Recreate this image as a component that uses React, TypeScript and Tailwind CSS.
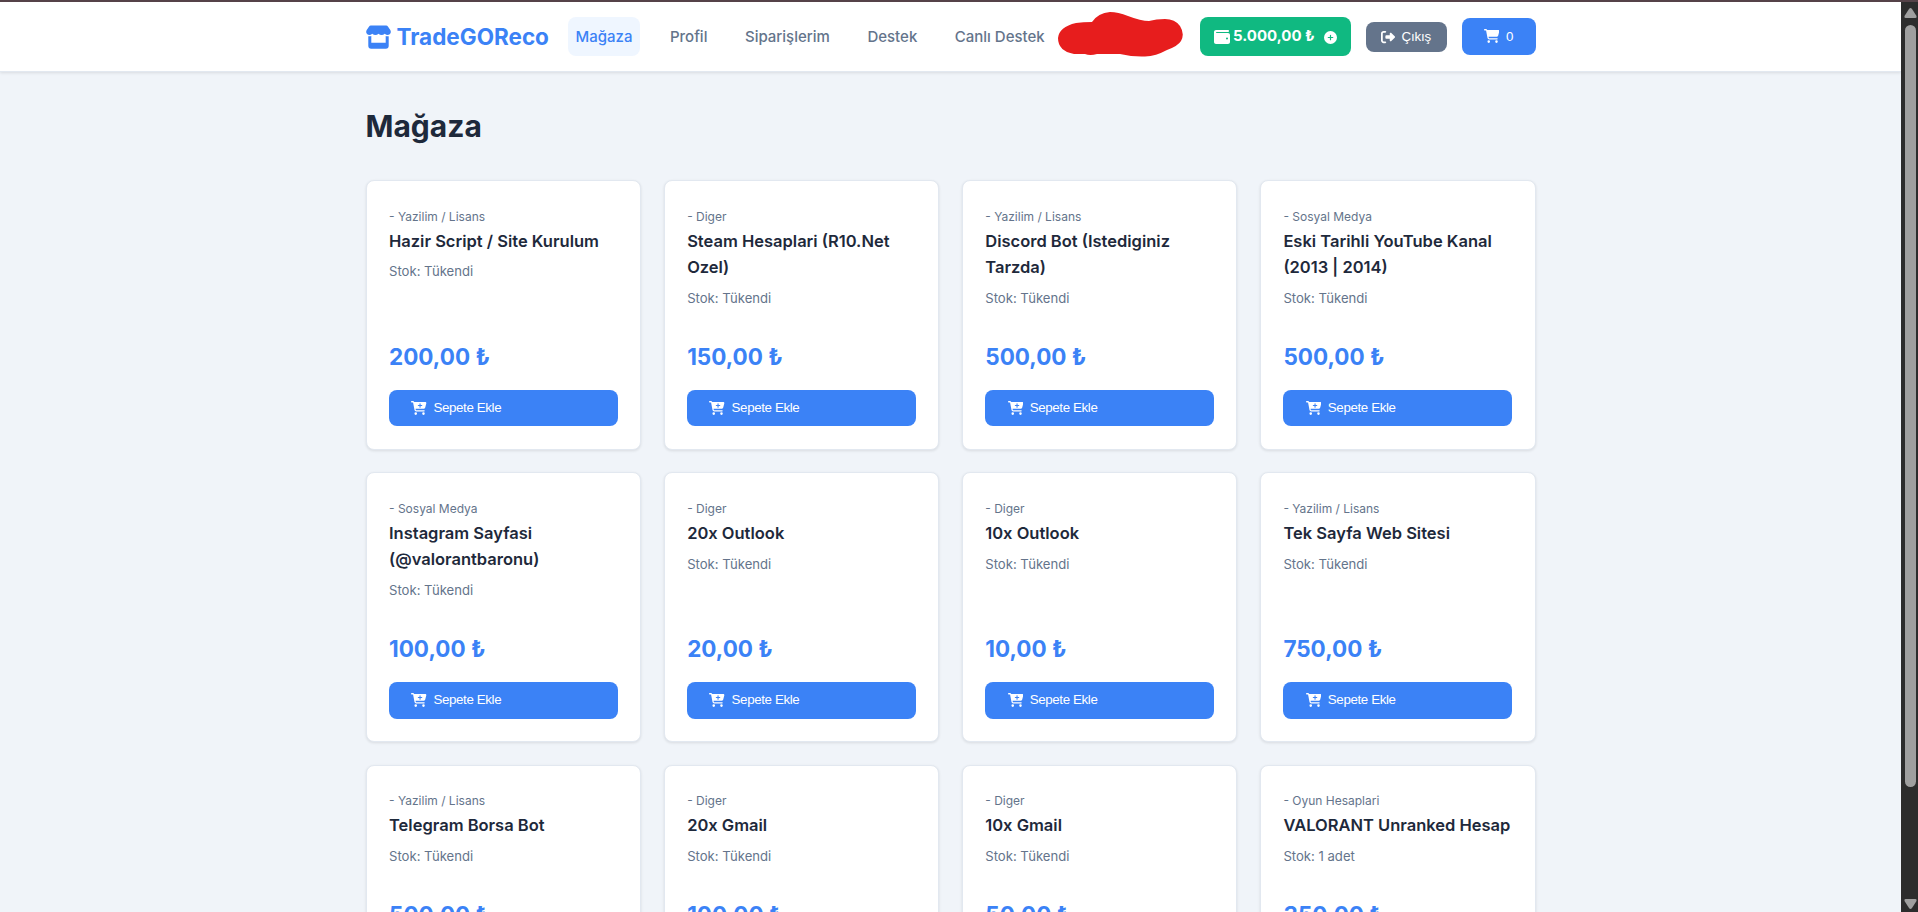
import { FaCartPlus, FaCirclePlus, FaCartShopping, FaRightFromBracket, FaWallet } from 'react-icons/fa6';

interface Product {
  category: string;
  name: string;
  stock: string;
  price: string;
}

const NAV_ITEMS = ['Mağaza', 'Profil', 'Siparişlerim', 'Destek', 'Canlı Destek'];

const PRODUCTS: Product[] = [
  { category: 'Yazilim / Lisans', name: 'Hazir Script / Site Kurulum', stock: 'Tükendi', price: '200,00' },
  { category: 'Diger', name: 'Steam Hesaplari (R10.Net Ozel)', stock: 'Tükendi', price: '150,00' },
  { category: 'Yazilim / Lisans', name: 'Discord Bot (Istediginiz Tarzda)', stock: 'Tükendi', price: '500,00' },
  { category: 'Sosyal Medya', name: 'Eski Tarihli YouTube Kanal (2013 | 2014)', stock: 'Tükendi', price: '500,00' },
  { category: 'Sosyal Medya', name: 'Instagram Sayfasi (@valorantbaronu)', stock: 'Tükendi', price: '100,00' },
  { category: 'Diger', name: '20x Outlook', stock: 'Tükendi', price: '20,00' },
  { category: 'Diger', name: '10x Outlook', stock: 'Tükendi', price: '10,00' },
  { category: 'Yazilim / Lisans', name: 'Tek Sayfa Web Sitesi', stock: 'Tükendi', price: '750,00' },
  { category: 'Yazilim / Lisans', name: 'Telegram Borsa Bot', stock: 'Tükendi', price: '500,00' },
  { category: 'Diger', name: '20x Gmail', stock: 'Tükendi', price: '100,00' },
  { category: 'Diger', name: '10x Gmail', stock: 'Tükendi', price: '50,00' },
  { category: 'Oyun Hesaplari', name: 'VALORANT Unranked Hesap', stock: '1 adet', price: '350,00' },
];

function StoreIcon() {
  return (
    <svg className="w-[25px] h-[24px] mr-px shrink-0" viewBox="0 0 25 24" fill="currentColor">
      <path d="M4.800 0.500H20.200Q21.300 0.500 21.900 1.500L24.300 5Q25.200 6.600 24.500 8.200Q23.600 10 21.800 10Q20.200 10 18.700 8.800Q17.300 10 15.600 10Q13.900 10 12.500 8.800Q11.100 10 9.400 10Q7.700 10 6.300 8.800Q4.800 10 3.200 10Q1.400 10 0.500 8.200Q-0.200 6.600 0.700 5L3.100 1.500Q3.700 0.500 4.800 0.500Z" />
      <path d="M2.300 11.200Q3.900 11.600 5.300 11V17.800H19.700V11Q21.100 11.600 22.700 11.200V20.800Q22.700 23.700 19.800 23.700H5.200Q2.300 23.700 2.300 20.800Z" />
    </svg>
  );
}

function Header() {
  return (
    <header className="h-[70px] shrink-0 bg-white border-b border-[#e2e8f0] shadow-[0_1px_3px_rgba(0,0,0,0.1)] relative">
      <div className="w-[1170px] h-[69px] mx-auto flex items-center">
        <a className="flex items-center gap-[5px] w-[202px] text-[22.5px] font-bold text-[#3b82f6] whitespace-nowrap">
          <StoreIcon />
          TradeGOReco
        </a>
        <nav className="flex items-center gap-[21.5px]">
          {NAV_ITEMS.map((item, i) => (
            <a
              key={item}
              className={
                i === 0
                  ? 'px-2 h-[39px] leading-[39px] rounded-lg text-[15px] font-medium text-[#3b82f6] bg-[#eff6ff]'
                  : 'px-2 h-[39px] leading-[39px] rounded-lg text-[15px] font-medium text-[#64748b] whitespace-nowrap'
              }
            >
              {item}
            </a>
          ))}
        </nav>

        {/* Gizlenen kullanıcı adı */}
        <svg className="w-[126px] h-[46px] ml-[5px] mb-[3px] shrink-0" viewBox="0 0 126 46" fill="#e71d1d">
          <path d="M18 11Q25 10 34 10Q40 1 52 0Q60 0 70 4Q83 9 91 9Q98 7 107 7Q117 7 122 14Q127 22 123 29Q120 34 109 38Q98 44 87 44.500Q75 45 62 42L39 42Q32 44 27 42L16 42Q0 39 0 26Q1 15 18 11Z" />
        </svg>

        <div className="flex items-center gap-[15px] ml-auto">
          <div className="w-[151px] h-[39px] rounded-lg bg-[#10b981] text-white flex items-center pl-[14px] text-[15px] font-bold whitespace-nowrap">
            <FaWallet className="w-4 h-4 mr-[3.5px]" />
            5.000,00 ₺
            <FaCirclePlus className="w-[13px] h-[13px] ml-[9.5px] mt-[2px]" />
          </div>
          <button className="w-[81px] h-[30px] rounded-lg bg-[#64748b] text-white flex items-center pl-[15px] gap-[7px] text-[13.33px] tracking-[-0.2px] font-['Liberation_Sans',Arial,sans-serif]">
            <FaRightFromBracket className="w-[14px] h-[14px]" />
            Çıkış
          </button>
          <button className="w-[74px] h-[37px] rounded-lg bg-[#3b82f6] text-white flex items-center pl-[22px] gap-[7px] text-[13.33px] font-['Liberation_Sans',Arial,sans-serif]">
            <FaCartShopping className="w-[15.5px] h-[14px] mb-[2px]" />
            0
          </button>
        </div>
      </div>
    </header>
  );
}

function ProductCard({ product }: { product: Product }) {
  return (
    <div className="flex flex-col bg-white border border-[#e2e8f0] rounded-lg shadow-[0_1px_3px_rgba(0,0,0,0.1)] px-[22.5px] pt-[25.5px] pb-[22.5px]">
      <p className="text-[12px] leading-[20px] text-[#64748b]">- {product.category}</p>
      <h3 className="text-[16.5px] leading-[26.4px] font-semibold text-[#1e293b] mt-[1.2px]">{product.name}</h3>
      <p className="text-[13.125px] leading-[21px] text-[#64748b] mt-[7.3px]">Stok: {product.stock}</p>
      <div className="mt-auto pt-[30px] text-[22.5px] leading-[36px] font-bold text-[#3b82f6]">{product.price} ₺</div>
      <button className="mt-[15.2px] h-[36.3px] shrink-0 rounded-lg bg-[#3b82f6] text-white flex items-center pl-[22.3px] gap-[6.7px] text-[13.33px] tracking-[-0.38px] font-['Liberation_Sans',Arial,sans-serif]">
        <FaCartPlus className="w-[15.5px] h-[14px] mb-px" />
        Sepete Ekle
      </button>
    </div>
  );
}

function Scrollbar() {
  return (
    <div className="w-[17px] h-full shrink-0 bg-[#2c2c2c] flex flex-col items-center">
      <svg className="w-[13px] h-[10px] mt-[6px] ml-[2px]" viewBox="0 0 13 10" fill="#9f9f9f">
        <path d="M6.500 0Q7.300 0 8 1L12.500 8Q13 10 11.500 10H1.500Q0 10 0.500 8L5 1Q5.700 0 6.500 0Z" />
      </svg>
      <div className="w-[11px] h-[762px] mt-[7px] ml-[2px] rounded-full bg-[#9f9f9f]" />
      <svg className="w-[13px] h-[10px] mt-auto mb-[3px] ml-[2px] rotate-180" viewBox="0 0 13 10" fill="#9f9f9f">
        <path d="M6.500 0Q7.300 0 8 1L12.500 8Q13 10 11.500 10H1.500Q0 10 0.500 8L5 1Q5.700 0 6.500 0Z" />
      </svg>
    </div>
  );
}

export default function App() {
  return (
    <div className="w-[1918px] h-[912px] overflow-hidden flex flex-col bg-[#f0f4f9] font-['Inter','Liberation_Sans',sans-serif]">
      <div className="h-[2px] shrink-0 bg-[#554248]" />
      <div className="h-[910px] flex">
        <div className="flex-1 h-full overflow-hidden">
          <Header />
          <main className="w-[1170px] mx-auto pt-[30px]">
            <h1 className="text-[30px] leading-[48px] font-bold text-[#1e293b] mb-[30px]">Mağaza</h1>
            <div className="grid grid-cols-4 gap-[22.5px]">
              {PRODUCTS.map((product) => (
                <ProductCard key={product.name} product={product} />
              ))}
            </div>
          </main>
        </div>
        <Scrollbar />
      </div>
    </div>
  );
}
